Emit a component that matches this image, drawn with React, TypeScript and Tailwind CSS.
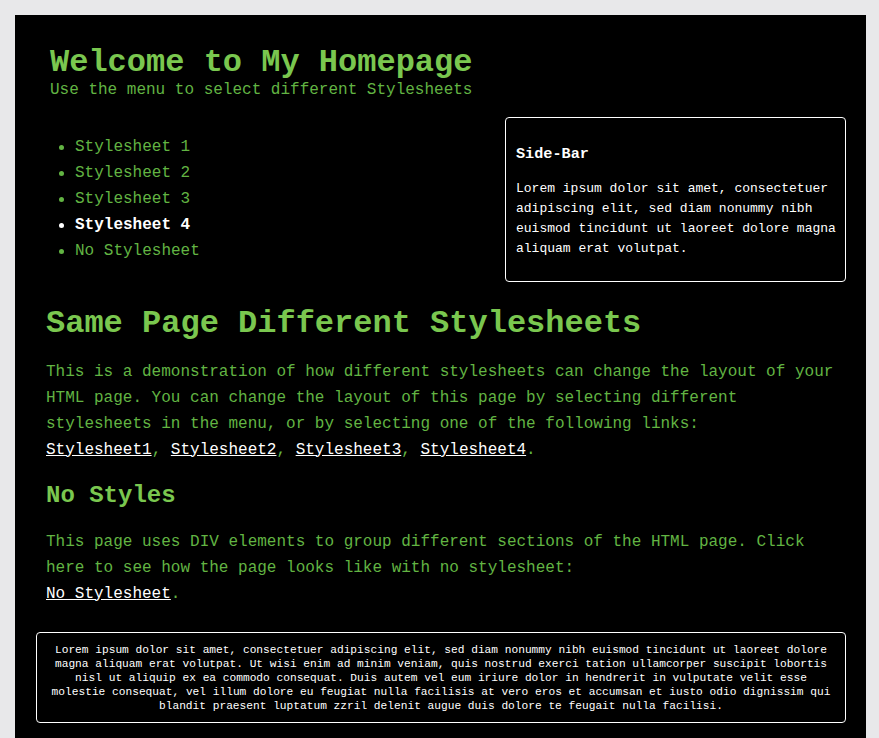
import React from "react";

const menu = [
  { label: "Stylesheet 1", active: false },
  { label: "Stylesheet 2", active: false },
  { label: "Stylesheet 3", active: false },
  { label: "Stylesheet 4", active: true },
  { label: "No Stylesheet", active: false },
];

export default function App() {
  return (
    <div className="min-h-screen bg-[#e8e8ea] pt-[15px] pl-[15px] font-['Liberation_Mono','Courier_New',monospace]">
      <div className="w-[851px] bg-black pb-[24px]">
        {/* Header */}
        <div className="pl-[35px] pt-[30px]">
          <h1 className="text-[32px] leading-[36px] font-bold text-[#7ac74f]">Welcome to My Homepage</h1>
          <p className="text-[16px] leading-[18px] text-[#62b443]">Use the menu to select different Stylesheets</p>
        </div>

        {/* Menu + Sidebar */}
        <div className="mt-[18px] flex justify-between pr-[20px]">
          <ul className="pl-[44px] pt-[17px]">
            {menu.map((m) => (
              <li key={m.label} className="flex h-[26px] items-center">
                <span className={`mr-[11px] h-[5px] w-[5px] rounded-full ${m.active ? "bg-white" : "bg-[#62b443]"}`} />
                <span className={`text-[16px] leading-[26px] ${m.active ? "font-bold text-white" : "text-[#62b443]"}`}>{m.label}</span>
              </li>
            ))}
          </ul>
          <div className="w-[341px] rounded-[4px] border border-white pt-[26px] pb-[22px] pl-[10px] pr-[6px] text-white">
            <h3 className="text-[15.2px] leading-[20px] font-bold">Side-Bar</h3>
            <p className="mt-[14.5px] text-[13px] leading-[20px]">
              Lorem ipsum dolor sit amet, consectetuer adipiscing elit, sed diam nonummy nibh euismod tincidunt ut laoreet dolore magna aliquam erat volutpat.
            </p>
          </div>
        </div>

        {/* Main */}
        <div className="pl-[31px] pr-[20px]">
          <h1 className="mt-[24px] text-[32px] leading-[36px] font-bold text-[#7ac74f]">Same Page Different Stylesheets</h1>
          <p className="mt-[17px] text-[16px] leading-[26px] text-[#62b443]">
            This is a demonstration of how different stylesheets can change the layout of your HTML page. You can change the layout of this page by selecting different stylesheets in the menu, or by selecting one of the following links:
            <br />
            <a className="text-white underline">Stylesheet1</a>, <a className="text-white underline">Stylesheet2</a>, <a className="text-white underline">Stylesheet3</a>, <a className="text-white underline">Stylesheet4</a>.
          </p>
          <h2 className="mt-[19px] text-[24px] leading-[28px] font-bold text-[#7ac74f]">No Styles</h2>
          <p className="mt-[19px] text-[16px] leading-[26px] text-[#62b443]">
            This page uses DIV elements to group different sections of the HTML page. Click here to see how the page looks like with no stylesheet:
            <br />
            <a className="text-white underline">No Stylesheet</a>.
          </p>
        </div>

        {/* Footer */}
        <div className="mt-[25px] ml-[21px] mr-[20px] rounded-[4px] border border-white px-[11px] pt-[10px] pb-[9px] text-center text-[11.2px] leading-[14px] text-white">
          Lorem ipsum dolor sit amet, consectetuer adipiscing elit, sed diam nonummy nibh euismod tincidunt ut laoreet dolore magna aliquam erat volutpat. Ut wisi enim ad minim veniam, quis nostrud exerci tation ullamcorper suscipit lobortis nisl ut aliquip ex ea commodo consequat. Duis autem vel eum iriure dolor in hendrerit in vulputate velit esse molestie consequat, vel illum dolore eu feugiat nulla facilisis at vero eros et accumsan et iusto odio dignissim qui blandit praesent luptatum zzril delenit augue duis dolore te feugait nulla facilisi.
        </div>
      </div>
    </div>
  );
}
